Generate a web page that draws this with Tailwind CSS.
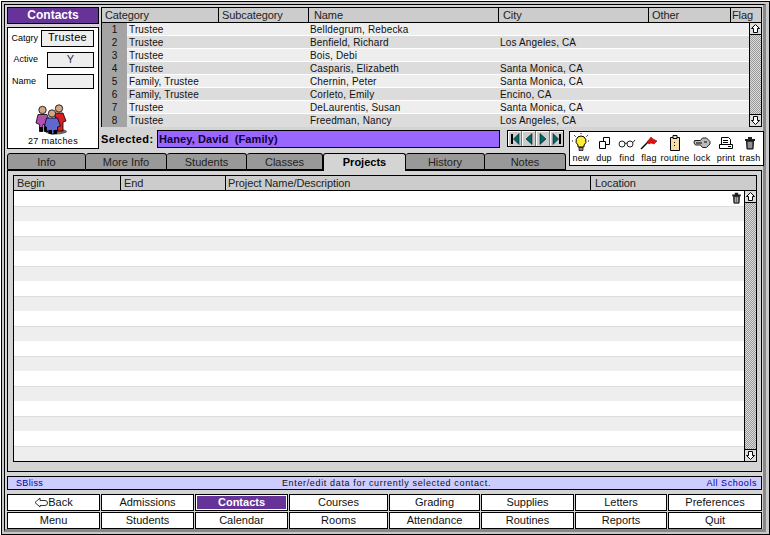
<!DOCTYPE html>
<html lang="en">
<head>
<meta charset="UTF-8">
<title>Contacts</title>
<script src="https://cdn.jsdelivr.net/npm/@tailwindcss/browser@4"></script>
</head>
<body class="w-[770px] h-[535px] overflow-hidden bg-white font-['Liberation_Sans',sans-serif] text-[10px] text-black">
<div class="w-[769px] h-[534px] mt-[1px] ml-[1px] border border-black bg-[#c8c8c8] p-[2px]">
<div class="w-[762px] h-[528px] border border-black border-r-[3px] border-r-[#888888] border-b-[3px] border-b-[#888888] bg-[#d4d4d4] pl-[2px] pr-[1px] pt-[2px] flex flex-col">

  <!-- top: search panel and list -->
  <div class="flex gap-[2px] h-[142px] shrink-0">
    <div class="w-[92px] shrink-0 flex flex-col gap-[3px]">
      <div class="h-[17px] bg-[#663399] border border-black text-white font-bold text-[12px] leading-[15px] text-center">Contacts</div>
      <div class="h-[122px] bg-white border border-black relative flex flex-col items-center">
        <div class="w-full flex items-center justify-end gap-[3px] pr-[4px] mt-[2px] h-[17px]">
          <span class="text-[9px]">Catgry</span>
          <div class="w-[53px] h-[17px] bg-[#eeeeee] border border-black text-[11px] leading-[13px] text-center tracking-[.3px]">Trustee</div>
        </div>
        <div class="w-full flex items-center justify-end gap-[9px] pr-[4px] mt-[5px] h-[16px]">
          <span class="text-[9px]">Active</span>
          <div class="w-[47px] h-[16px] bg-[#eeeeee] border border-black text-[11px] leading-[13px] text-center text-[#333]">Y</div>
        </div>
        <div class="w-full flex items-center justify-end gap-[11px] pr-[4px] mt-[6px] h-[15px]">
          <span class="text-[9px]">Name</span>
          <div class="w-[47px] h-[15px] bg-[#eeeeee] border border-black"></div>
        </div>
        <svg class="mt-[15px] -ml-[3px]" width="33" height="31" viewBox="0 0 33 31">
          <ellipse cx="21" cy="27.500" rx="11" ry="3" fill="#666"/>
          <circle cx="24" cy="4.500" r="3.700" fill="#d0a888" stroke="#000" stroke-width=".8"/>
          <path d="M20 9h8l3 8-3 1v9h-7z" fill="#d82020" stroke="#000" stroke-width=".8"/>
          <circle cx="7.500" cy="6" r="3.700" fill="#d0a888" stroke="#000" stroke-width=".8"/>
          <path d="M3 10.500h9l3 8v5h-2v4H9.500v-7H8v7H4.500v-7L1 19z" fill="#b050b0" stroke="#000" stroke-width=".8"/>
          <path d="M4.500 23h3.500v4.500H4.500zM9.500 23H13v4.500H9.500z" fill="#000"/>
          <circle cx="17" cy="9.500" r="3.700" fill="#d0a888" stroke="#000" stroke-width=".8"/>
          <path d="M11.500 14h11l3 8-3 1v4h-3v3h-4v-3h-4v-4l-2-1z" fill="#6068d0" stroke="#000" stroke-width=".8"/>
          <path d="M13.500 26h3.500v4h-3.500zM18.500 26H22v4h-3.500z" fill="#000"/>
        </svg>
        <div class="absolute bottom-[0px] inset-x-0 text-center text-[9px] tracking-[.35px]">27 matches</div>
      </div>
    </div>

    <div class="flex-1 min-w-0">
      <div class="h-[120px] border border-black bg-[#eeeeee] flex flex-col">
        <div class="flex h-[15px] shrink-0 bg-[#cccccc] border-b border-black text-[11px] leading-[14px] tracking-[-.1px] text-[#222]">
          <div class="w-[117px] pl-[3px] border-r border-black">Category</div>
          <div class="w-[90px] pl-[3px] border-r border-black">Subcategory</div>
          <div class="w-[190px] pl-[5px] border-r border-black">Name</div>
          <div class="w-[150px] pl-[4px] border-r border-black">City</div>
          <div class="w-[82px] pl-[3px] border-r border-black">Other</div>
          <div class="flex-1 pl-[1px]">Flag</div>
        </div>
        <div class="flex flex-1 min-h-0">
          <div class="flex-1 min-w-0 text-[10px] leading-[13px] tracking-[.15px] text-[#111]">
            <div class="flex h-[13px]"><div class="w-[25px] bg-[#a4a4a4] text-center">1</div><div class="flex flex-1 bg-[#eeeeee] border-b border-white"><div class="w-[183px] pl-[2px]">Trustee</div><div class="w-[190px]">Belldegrum, Rebecka</div><div></div></div></div>
            <div class="flex h-[13px]"><div class="w-[25px] bg-[#a4a4a4] text-center">2</div><div class="flex flex-1 bg-[#dcdcdc] border-b border-white"><div class="w-[183px] pl-[2px]">Trustee</div><div class="w-[190px]">Benfield, Richard</div><div>Los Angeles, CA</div></div></div>
            <div class="flex h-[13px]"><div class="w-[25px] bg-[#a4a4a4] text-center">3</div><div class="flex flex-1 bg-[#eeeeee] border-b border-white"><div class="w-[183px] pl-[2px]">Trustee</div><div class="w-[190px]">Bois, Debi</div><div></div></div></div>
            <div class="flex h-[13px]"><div class="w-[25px] bg-[#a4a4a4] text-center">4</div><div class="flex flex-1 bg-[#dcdcdc] border-b border-white"><div class="w-[183px] pl-[2px]">Trustee</div><div class="w-[190px]">Casparis, Elizabeth</div><div>Santa Monica, CA</div></div></div>
            <div class="flex h-[13px]"><div class="w-[25px] bg-[#a4a4a4] text-center">5</div><div class="flex flex-1 bg-[#eeeeee] border-b border-white"><div class="w-[183px] pl-[2px]">Family, Trustee</div><div class="w-[190px]">Chernin, Peter</div><div>Santa Monica, CA</div></div></div>
            <div class="flex h-[13px]"><div class="w-[25px] bg-[#a4a4a4] text-center">6</div><div class="flex flex-1 bg-[#dcdcdc] border-b border-white"><div class="w-[183px] pl-[2px]">Family, Trustee</div><div class="w-[190px]">Corleto, Emily</div><div>Encino, CA</div></div></div>
            <div class="flex h-[13px]"><div class="w-[25px] bg-[#a4a4a4] text-center">7</div><div class="flex flex-1 bg-[#eeeeee] border-b border-white"><div class="w-[183px] pl-[2px]">Trustee</div><div class="w-[190px]">DeLaurentis, Susan</div><div>Santa Monica, CA</div></div></div>
            <div class="flex h-[13px]"><div class="w-[25px] bg-[#a4a4a4] text-center">8</div><div class="flex flex-1 bg-[#dcdcdc]"><div class="w-[183px] pl-[2px]">Trustee</div><div class="w-[190px]">Freedman, Nancy</div><div>Los Angeles, CA</div></div></div>
          </div>
          <div class="w-[12px] shrink-0 flex flex-col bg-[conic-gradient(#999_25%,#ddd_0_50%,#999_0_75%,#ddd_0)] bg-[length:2px_2px] border-l border-black">
            <div class="h-[12px] bg-[#dddddd] border-b border-black flex items-center justify-center"><svg width="9" height="9" viewBox="0 0 9 9"><path d="M4.5.5 8.500 4.500H6.500V8.500H2.500V4.500H.5z" fill="#fff" stroke="#000"/></svg></div>
            <div class="flex-1"></div>
            <div class="h-[12px] bg-[#dddddd] border-t border-black flex items-center justify-center"><svg width="9" height="9" viewBox="0 0 9 9"><path d="M4.5 8.500 8.500 4.500H6.500V.5H2.500V4.500H.5z" fill="#fff" stroke="#000"/></svg></div>
          </div>
        </div>
      </div>
      <div class="flex items-start mt-[3px]">
        <div class="w-[56px] font-bold text-[11px] leading-[18px] tracking-[.4px]">Selected:</div>
        <div class="w-[343px] h-[18px] bg-[#9966ff] border border-black font-bold text-[11px] leading-[16px] tracking-[.1px] pl-[1px] text-[#110033] whitespace-pre">Haney, David  (Family)</div>
        <div class="ml-[7px] w-[57px] h-[17px] border border-black bg-[#777777] flex gap-[1px]">
          <div class="flex-1 bg-[#cccccc] border-t border-l border-t-white border-l-white flex items-center justify-center"><svg width="10" height="12" viewBox="0 0 10 12"><path d="M1 1h2v10H1z" fill="#000"/><path d="M9 .5v11L3.500 6z" fill="#006666" stroke="#000" stroke-width=".5"/></svg></div>
          <div class="flex-1 bg-[#cccccc] border-t border-l border-t-white border-l-white flex items-center justify-center"><svg width="8" height="12" viewBox="0 0 8 12"><path d="M7 .5v11L1 6z" fill="#006666" stroke="#000" stroke-width=".5"/></svg></div>
          <div class="flex-1 bg-[#cccccc] border-t border-l border-t-white border-l-white flex items-center justify-center"><svg width="8" height="12" viewBox="0 0 8 12"><path d="M1 .5v11L7 6z" fill="#006666" stroke="#000" stroke-width=".5"/></svg></div>
          <div class="flex-1 bg-[#cccccc] border-t border-l border-t-white border-l-white flex items-center justify-center"><svg width="10" height="12" viewBox="0 0 10 12"><path d="M7 1h2v10H7z" fill="#000"/><path d="M1 .5v11L6.500 6z" fill="#006666" stroke="#000" stroke-width=".5"/></svg></div>
        </div>
      </div>
    </div>
  </div>

  <!-- tabs with toolbar lying over the right end -->
  <div class="relative flex h-[18px] shrink-0 mt-[4px] text-[11px] text-[#222] z-10">
    <div class="w-[79px] h-[17px] bg-[#999999] border border-black rounded-t-[3px] text-center leading-[16px]">Info</div>
    <div class="w-[81px] h-[17px] bg-[#999999] border border-black border-l-0 rounded-t-[3px] text-center leading-[16px]">More Info</div>
    <div class="w-[80px] h-[17px] bg-[#999999] border border-black border-l-0 rounded-t-[3px] text-center leading-[16px]">Students</div>
    <div class="w-[76px] h-[17px] bg-[#999999] border border-black border-l-0 rounded-t-[3px] text-center leading-[16px]">Classes</div>
    <div class="w-[83px] h-[18px] bg-[#d4d4d4] border border-black border-b-0 rounded-t-[3px] text-center leading-[16px] font-bold text-black">Projects</div>
    <div class="w-[79px] h-[17px] bg-[#999999] border border-black border-l-0 rounded-t-[3px] text-center leading-[16px]">History</div>
    <div class="w-[81px] h-[17px] bg-[#999999] border border-black border-l-0 rounded-t-[3px] text-center leading-[16px]">Notes</div>
    <div class="absolute left-[562px] -top-[22px] w-[195px] h-[35px] bg-white border border-black flex text-[9px] tracking-[.2px] text-black leading-[10px] text-center">
      <div class="flex flex-col items-center w-[22px]"><div class="h-[21px] flex items-center"><svg width="18" height="19" viewBox="0 0 18 19"><path d="M9 3a5 5 0 0 0-3 9v2h6v-2a5 5 0 0 0-3-9z" fill="#ffee33" stroke="#000"/><path d="M7 14.500h4v3H7z" fill="#888" stroke="#000" stroke-width=".7"/><path d="M9 0v2M2 2l2 2M16 2l-2 2M0 8h2M16 8h2" stroke="#000" stroke-dasharray="1 1"/></svg></div><span>new</span></div>
      <div class="flex flex-col items-center w-[24px]"><div class="h-[21px] flex items-center"><svg width="14" height="14" viewBox="0 0 14 14" fill="#fff" stroke="#000"><path d="M6.500 1.500h6v7h-6z"/><path d="M2.500 5.500h6v7h-6z"/></svg></div><span>dup</span></div>
      <div class="flex flex-col items-center w-[22px]"><div class="h-[21px] flex items-center"><svg width="18" height="12" viewBox="0 0 18 12" fill="none" stroke="#222"><circle cx="4" cy="7" r="3"/><circle cx="12" cy="7" r="3"/><path d="M7 6.500 9 6M15 5.500 17 3"/></svg></div><span>find</span></div>
      <div class="flex flex-col items-center w-[22px]"><div class="h-[21px] flex items-center"><svg width="18" height="14" viewBox="0 0 18 14"><path d="M1 13 9 5" stroke="#000" stroke-width="1.500"/><path d="M7 6l4-5 2 2 4 2-3 3-3-1-2 1z" fill="#e01010" stroke="#600" stroke-width=".5"/></svg></div><span>flag</span></div>
      <div class="flex flex-col items-center w-[30px]"><div class="h-[21px] flex items-center"><svg width="12" height="16" viewBox="0 0 12 16"><path d="M1.500 2.500h9v13h-9z" fill="#f5dfa8" stroke="#000"/><path d="M4 .5h4v3H4z" fill="#ddd" stroke="#000"/><path d="M5 7h1v1H5zM5 10h1v1H5z" fill="#000"/></svg></div><span>routine</span></div>
      <div class="flex flex-col items-center w-[24px]"><div class="h-[21px] flex items-center"><svg width="18" height="12" viewBox="0 0 18 12"><path d="M1.500 3.500h6l2-2.500h4l3.500 3.500v2.500l-3.500 3.500h-4l-2-2.500h-5l-1.500-2z" fill="#bbb" stroke="#222"/><path d="M3 6h6M11 5h3" stroke="#000"/></svg></div><span>lock</span></div>
      <div class="flex flex-col items-center w-[24px]"><div class="h-[21px] flex items-center"><svg width="16" height="14" viewBox="0 0 16 14" fill="#fff" stroke="#000"><path d="M3.500 1.500h7l2 2v5h-9z"/><path d="M1.500 8.500h13v4h-13z"/><path d="M5 4.500h5M5 6.500h5M10 10.500h3"/></svg></div><span>print</span></div>
      <div class="flex flex-col items-center w-[24px]"><div class="h-[21px] flex items-center"><svg width="12" height="14" viewBox="0 0 12 14"><path d="M1 3h10v2H1zM4 1h4v2H4z" fill="#222"/><path d="M2.500 5h7l-.5 8H3z" fill="#555" stroke="#111"/><path d="M5 6v6M7 6v6" stroke="#ccc"/></svg></div><span>trash</span></div>
    </div>
  </div>

  <!-- tab panel -->
  <div class="h-[302px] shrink-0 -mt-[1px] border border-black bg-[#d4d4d4] pt-[4px] pl-[5px]">
    <div class="w-[744px] h-[287px] border border-black flex flex-col bg-white">
      <div class="flex h-[15px] shrink-0 bg-[#cccccc] border-b border-black text-[11px] leading-[14px] tracking-[-.1px] text-[#222]">
        <div class="w-[107px] pl-[3px] border-r border-black">Begin</div>
        <div class="w-[105px] pl-[3px] border-r border-black">End</div>
        <div class="w-[365px] pl-[2px] border-r border-black">Project Name/Description</div>
        <div class="flex-1 pl-[4px]">Location</div>
      </div>
      <div class="flex flex-1 min-h-0">
        <div class="flex-1 min-w-0 relative">
          <div class="h-[15px] bg-white"></div>
          <div class="h-[15px] bg-[#eeeeee] border-t border-[#dddddd]"></div>
          <div class="h-[15px] bg-white"></div>
          <div class="h-[15px] bg-[#eeeeee] border-t border-[#dddddd]"></div>
          <div class="h-[15px] bg-white"></div>
          <div class="h-[15px] bg-[#eeeeee] border-t border-[#dddddd]"></div>
          <div class="h-[15px] bg-white"></div>
          <div class="h-[15px] bg-[#eeeeee] border-t border-[#dddddd]"></div>
          <div class="h-[15px] bg-white"></div>
          <div class="h-[15px] bg-[#eeeeee] border-t border-[#dddddd]"></div>
          <div class="h-[15px] bg-white"></div>
          <div class="h-[15px] bg-[#eeeeee] border-t border-[#dddddd]"></div>
          <div class="h-[15px] bg-white"></div>
          <div class="h-[15px] bg-[#eeeeee] border-t border-[#dddddd]"></div>
          <div class="h-[15px] bg-white"></div>
          <div class="h-[15px] bg-[#eeeeee] border-t border-[#dddddd]"></div>
          <div class="h-[15px] bg-white"></div>
          <div class="h-[15px] bg-[#eeeeee] border-t border-[#dddddd]"></div>
          <svg class="absolute right-[2px] top-[1px]" width="11" height="12" viewBox="0 0 12 14"><path d="M1 3h10v2H1zM4 1h4v2H4z" fill="#222"/><path d="M2.500 5h7l-.5 8H3z" fill="#555" stroke="#111"/><path d="M5 6v6M7 6v6" stroke="#ccc"/></svg>
        </div>
        <div class="w-[12px] shrink-0 flex flex-col bg-[conic-gradient(#999_25%,#ddd_0_50%,#999_0_75%,#ddd_0)] bg-[length:2px_2px] border-l border-black">
          <div class="h-[12px] bg-[#dddddd] border-b border-black flex items-center justify-center"><svg width="9" height="9" viewBox="0 0 9 9"><path d="M4.5.5 8.500 4.500H6.500V8.500H2.500V4.500H.5z" fill="#fff" stroke="#000"/></svg></div>
          <div class="flex-1"></div>
          <div class="h-[12px] bg-[#dddddd] border-t border-black flex items-center justify-center"><svg width="9" height="9" viewBox="0 0 9 9"><path d="M4.5 8.500 8.500 4.500H6.500V.5H2.500V4.500H.5z" fill="#fff" stroke="#000"/></svg></div>
        </div>
      </div>
    </div>
  </div>

  <!-- status bar -->
  <div class="h-[14px] shrink-0 mt-[4px] bg-[#ccccff] border border-black grid grid-cols-3 pl-[8px] pr-[4px] text-[9px] leading-[12px] text-[#000099] whitespace-nowrap">
    <span class="tracking-[.35px]">SBliss</span>
    <span class="text-[#111] text-center tracking-[.65px]">Enter/edit data for currently selected contact.</span>
    <span class="text-right tracking-[.55px]">All Schools</span>
  </div>

  <!-- nav buttons -->
  <div class="grid grid-cols-[93px_93px_93px_99px_91px_93px_92px_1fr] gap-x-[1px] gap-y-[1px] mt-[4px] text-[11px] leading-[15px] text-center text-[#111]">
    <div class="h-[17px] bg-white border border-black flex items-center justify-center"><svg width="14" height="11" viewBox="0 0 14 11" fill="#fff" stroke="#333"><path d="M1 5.500 6 1v2.500h5a2 2 0 0 1 0 5H6V10z"/></svg>Back</div>
    <div class="h-[17px] bg-white border border-black">Admissions</div>
    <div class="h-[17px] bg-[#663399] border border-black shadow-[inset_0_0_0_1px_#fff] text-white font-bold">Contacts</div>
    <div class="h-[17px] bg-white border border-black">Courses</div>
    <div class="h-[17px] bg-white border border-black">Grading</div>
    <div class="h-[17px] bg-white border border-black">Supplies</div>
    <div class="h-[17px] bg-white border border-black">Letters</div>
    <div class="h-[17px] bg-white border border-black">Preferences</div>
    <div class="h-[17px] bg-white border border-black">Menu</div>
    <div class="h-[17px] bg-white border border-black">Students</div>
    <div class="h-[17px] bg-white border border-black">Calendar</div>
    <div class="h-[17px] bg-white border border-black">Rooms</div>
    <div class="h-[17px] bg-white border border-black">Attendance</div>
    <div class="h-[17px] bg-white border border-black">Routines</div>
    <div class="h-[17px] bg-white border border-black">Reports</div>
    <div class="h-[17px] bg-white border border-black">Quit</div>
  </div>
</div>
</div>
</body>
</html>
